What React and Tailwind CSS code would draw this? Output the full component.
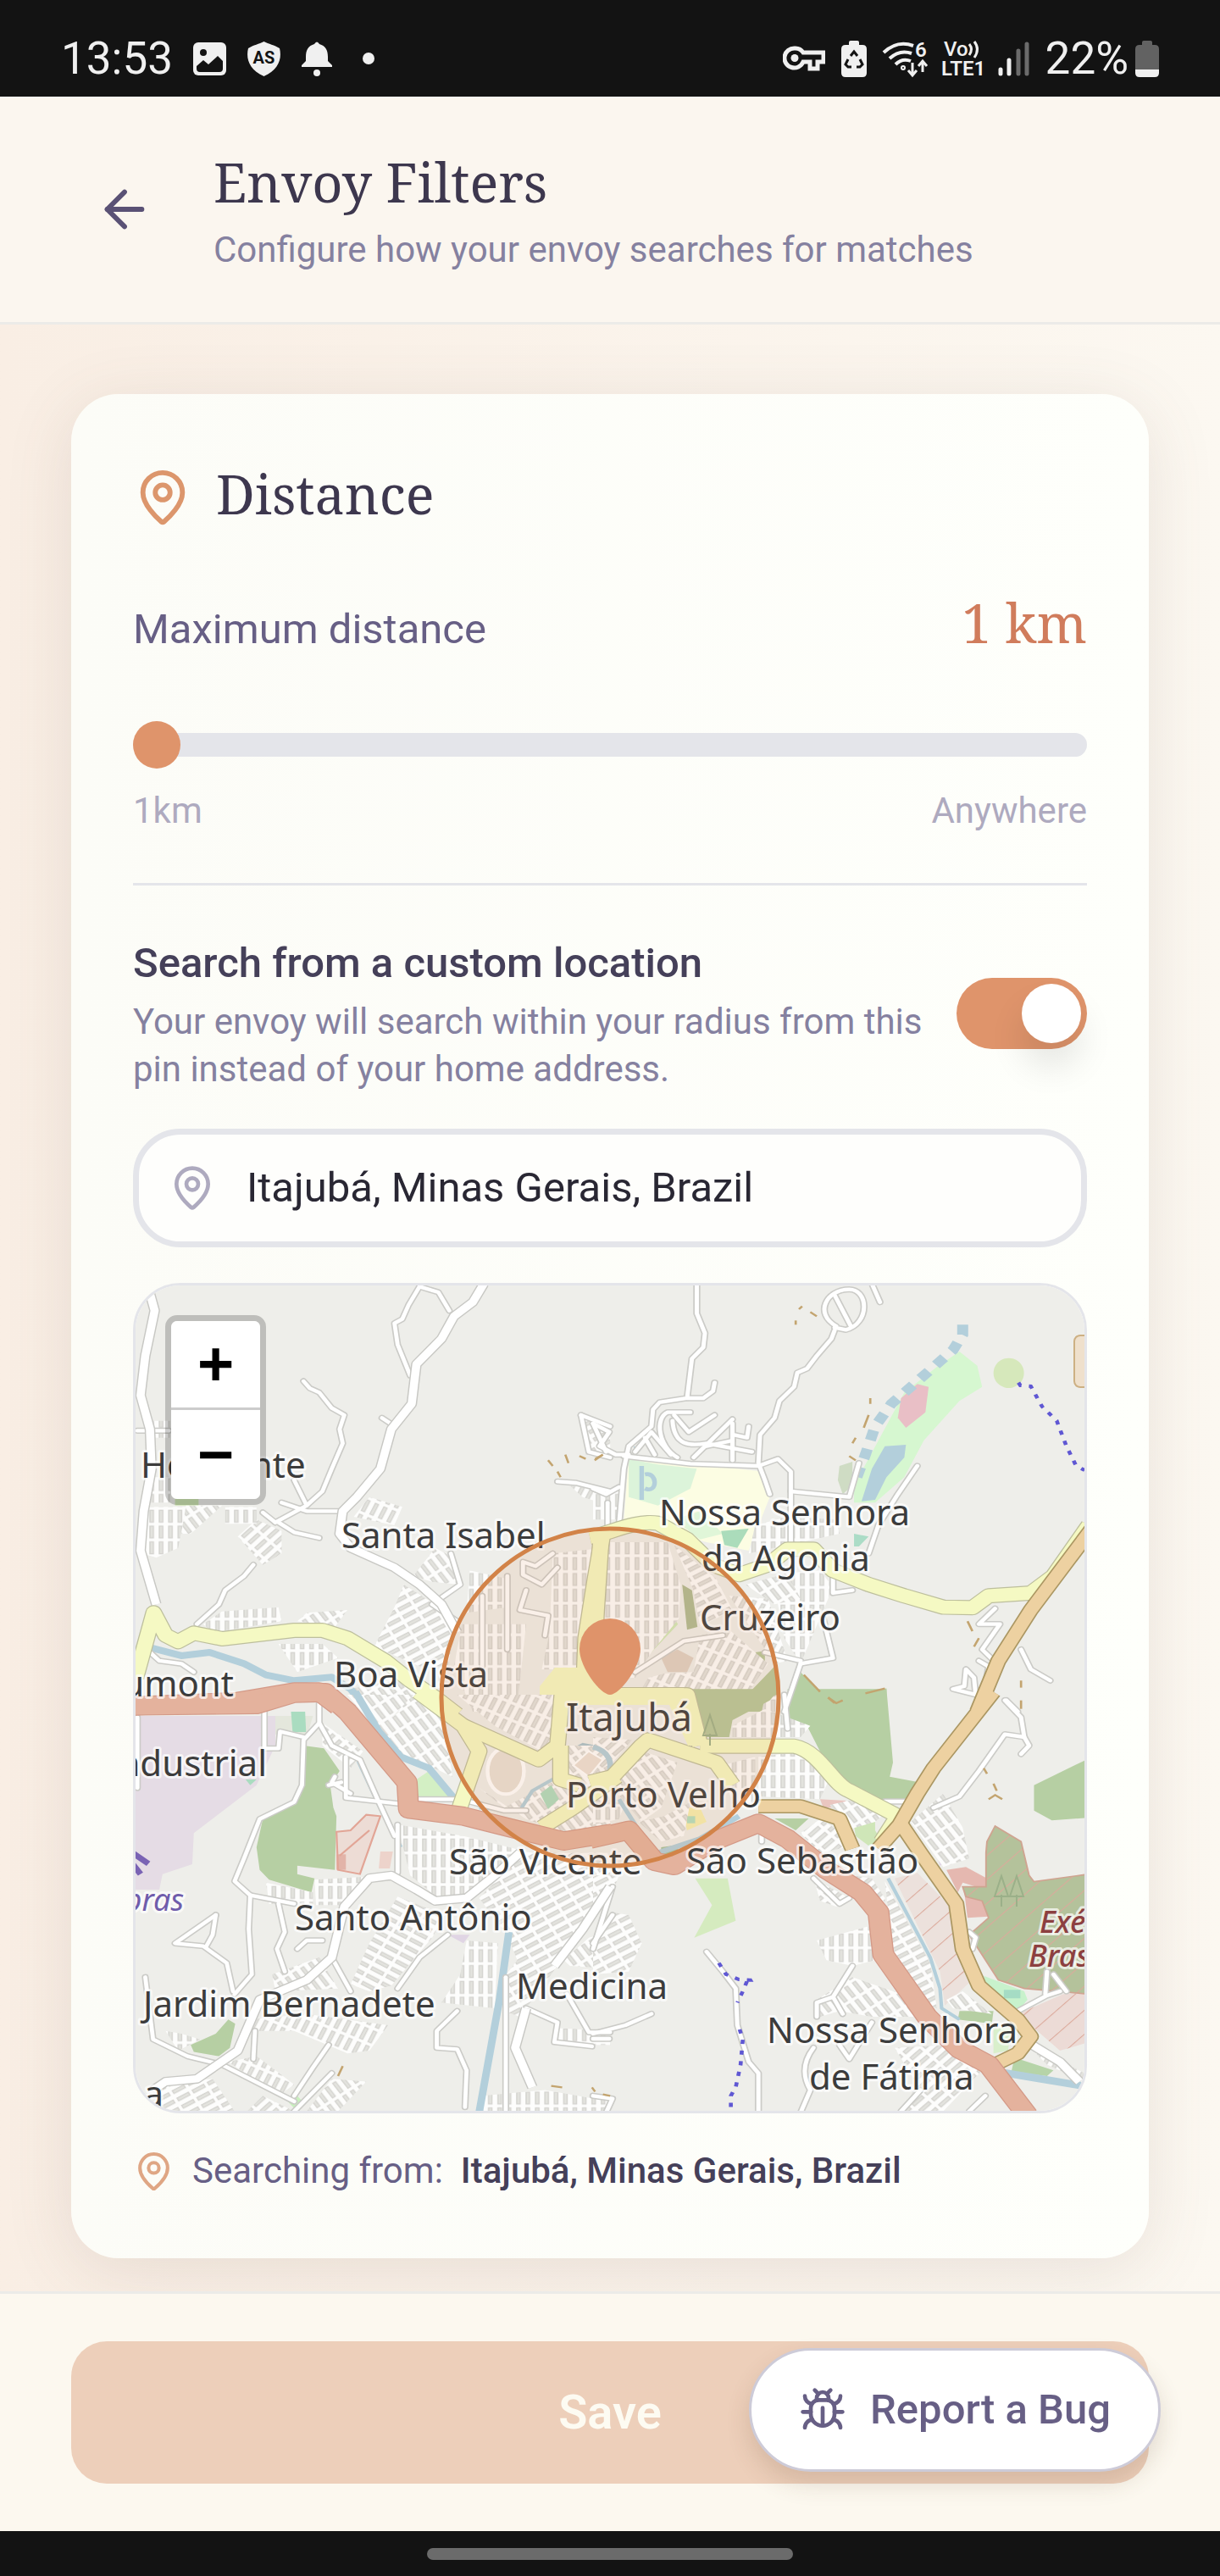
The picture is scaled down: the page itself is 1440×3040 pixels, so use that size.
import { useState } from "react"
import { ArrowLeft, Bug, MapPin } from "lucide-react"

const blockAngles = [0, 25, 45, 60, -35, -60]

// Each tile keeps its own drawing units and is placed by its transform
const tiles = [
  {
    name: "nw",
    transform: "translate(140 1500) scale(0.37 0.3333)",
    areas: [
      ["M180 800H255V830H180Z", "#cfe6b4"],
      ["M1110 1360L1130 1340 1140 1400 1110 1410Z", "#cfe0b8"],
    ],
    blocks: [
      ["M75 835H215L190 980 120 1015 75 1000Z", 0],
      ["M215 830H330L230 930 200 930Z", -35],
      ["M100 530H165V590H100Z", 0],
      ["M95 730H165V820H95Z", 0],
      ["M380 940L440 880 520 920V1000L460 1040Z", 45],
      ["M340 835H440V895H340Z", 0],
      ["M270 1250L330 1205 510 1190 520 1240 300 1280Z", 0],
      ["M510 1320H650L700 1370 570 1420Z", 0],
      ["M570 1240L600 1210 730 1200 690 1260Z", -35],
      ["M800 800L905 835 880 900 750 870Z", 25],
      ["M940 1080L1010 980 1060 1010 1090 1110 1000 1100Z", -35],
      ["M815 1330L880 1190 910 1110 1080 1230 1050 1400 960 1400Z", 60],
      ["M1120 1060L1240 1090V1190L1110 1210Z", 0],
      ["M1095 1250H1300L1270 1560H1130L1070 1400Z", 0],
      ["M1385 1000L1510 985 1480 1410H1350L1375 1280Z", 0],
      ["M740 1480L900 1440 1010 1510 1050 1560H780Z", -35],
      ["M1440 760L1568 780V830L1480 800Z", 25],
      ["M1480 520L1568 550V650H1490Z", 60],
    ],
    rivers: [
      ["M90 1330L200 1362 290 1350 400 1390 470 1430 560 1450 680 1438 740 1480 800 1560", 24],
    ],
    lanes: [
      "M960 55L925 120 905 170 880 185 890 260 930 370",
      "M960 55L1020 75 1055 140",
      "M590 390L610 415 640 430 680 485 720 510 705 560 715 610 680 700 650 780 600 830 500 890",
      "M520 820L600 850 700 850",
      "M560 740L600 830",
      "M510 890L560 925 640 945",
      "M500 890L460 855",
      "M430 1040L400 1080 340 1130 320 1180 250 1250",
      "M840 520L875 545",
      "M1475 510L1568 550",
      "M1475 510L1500 640 1568 660",
      "M1400 745L1460 750 1568 780",
      "M1560 820V900",
      "M60 565H160",
      "M90 1340L130 1380 200 1390 240 1420",
      "M1080 1240L1000 1180 1090 1110 1060 1000",
      "M1385 1000L1330 1045 1290 1030V1075L1350 1110 1400 1050",
      "M1300 1130L1280 1200 1370 1220 1360 1290",
      "M1240 1080V1340M1160 1150V1400",
    ],
    streets: [
      "M1165 45L1130 110 1070 160 1030 240 950 330 935 470 870 560 835 700 760 800 715 850 705 930 740 980 880 1050 960 1110 1030 1180 1080 1280",
      "M100 80L115 140 85 300 70 440 100 560 105 700 80 850 70 990 120 1180",
    ],
    secondary: [
      "M55 1440L112 1210L150 1290 190 1312 240 1282 330 1302 560 1272 650 1272 730 1300 850 1380 930 1450 1010 1510 1080 1570",
      "M1545 930L1520 1090 1490 1300 1485 1440",
    ],
    primary: [],
    trunk: ["M40 1540L380 1524 560 1490 640 1490 700 1540"],
    dashes: ["M1370 670L1385 690", "M1400 710L1410 730", "M1425 650L1435 680", "M1470 655L1490 665", "M1520 665L1545 650"],
    paths: [],
  },
  {
    name: "ne",
    transform: "translate(700 1500) scale(0.3827 0.3333)",
    areas: [
      ["M1130 285L1185 335 1200 410 1130 460 1020 600 960 730 870 820H805V760L880 600 960 430 1060 340Z", "#d6f7d0"],
      ["M1000 400L1035 410 1025 500 965 555 940 520 950 450Z", "#e9bfc6"],
      ["M900 620L965 615 960 660 905 730 870 810 828 815 860 700Z", "#b3cfdb"],
      ["M760 690L800 675V760L770 790 755 740Z", "#cfdcc4"],
      ["M1282 308a47 53 0 1 0 0.1 0Z", "#d6e8bb"],
      ["M110 665L240 675 530 710 545 800 480 990 350 960 95 880Z", "#fcfde3"],
      ["M110 665L200 685 320 700 300 770 200 830 110 800Z", "#dcf4da"],
      ["M250 880L330 850 400 930 330 950Z", "#e0f6d8"],
      ["M395 920L480 912 445 980 405 970Z", "#abdcbb"],
      ["M805 930L850 940 820 975H805Z", "#abdcc6"],
      ["M125 620L150 630 130 645Z", "#b3cfdb"],
      ["M640 1420L690 1480 740 1530 800 1500 905 1478V1560H600L620 1440Z", "#b6cfa3"],
      ["M310 1530L380 1480 480 1495 560 1400 575 1560H305Z", "#b6c79a"],
      ["M275 1110L305 1130 322 1260 290 1270Z", "#aebb92"],
      ["M235 1205L262 1250 180 1350Z", "#d0e8b8"],
      ["M210 1370L260 1340 310 1370 290 1420 230 1420Z", "#ded0c4"],
      ["M500 1350L530 1345V1385L500 1380Z", "#b6c79a"],
    ],
    blocks: [
      ["M0 780H80L75 880H0Z", 0],
      ["M500 900L600 870 750 880 760 930 640 960 480 1000Z", 0],
      ["M590 1070L700 1060 740 1120 640 1390 590 1300 560 1120Z", 0],
      ["M470 1110L600 1070 640 1160 560 1180Z", -35],
      ["M40 960H230L270 1110 265 1230 180 1350 130 1440 30 1440Z", 0],
      ["M250 970L380 1090 430 1200 330 1260 310 1130Z", 60],
      ["M420 1150L540 1160 600 1380 560 1390Z", 25],
      ["M170 1440L220 1425 310 1420 330 1290 420 1270 540 1390 480 1490 150 1480Z", 25],
      ["M530 1510L570 1500V1560H520Z", 0],
    ],
    rivers: [["M150 690V810M160 720C200 710 200 790 160 770", 14]],
    lanes: [
      "M320 50V150L345 220 340 270 305 310 290 450 205 465 185 490 180 550 110 620 95 700 80 900",
      "M290 450H340L370 425 375 395",
      "M750 195C680 150 720 65 790 65C850 65 855 185 780 208L745 200",
      "M745 85L795 195",
      "M862 50L885 110",
      "M745 210L735 240 690 300 660 345 630 360 620 410 575 460 560 520 515 580 510 680 530 740 545 790",
      "M95 655L300 682 510 690 570 665 610 710V960",
      "M610 780L790 800 820 680",
      "M1000 690L940 790 880 900 850 1000",
      "M0 540L50 570 20 620 70 650 110 650",
      "M0 540L40 640",
      "M0 770L40 790 80 765",
      "M300 500H230C190 520 200 620 260 660",
      "M250 510L295 570 375 510",
      "M245 530C250 620 300 620 350 610L490 640",
      "M310 660L430 525",
      "M430 540V670",
      "M350 620L430 600",
      "M480 550L475 590 435 580",
      "M160 590L190 650",
      "M130 640L180 570 240 650",
      "M640 1390L740 1370 710 1230",
      "M530 1350L640 1380",
      "M1240 1195L1190 1250 1255 1250 1200 1340 1245 1390 1215 1440",
      "M1150 1410L1145 1470 1110 1480 1180 1500 1175 1440Z",
      "M1190 1380L1220 1400 1205 1500",
      "M1320 1340L1350 1410 1410 1450",
      "M1275 1520L1310 1560",
      "M740 1080L740 1140 800 1130",
      "M640 1390L590 1560",
      "M130 1420L280 1310 400 1290",
    ],
    streets: [],
    secondary: [
      "M-10 942C50 930 130 880 200 893L290 950 370 1040 450 1075 540 1040 600 985 680 985 740 1060 850 1110 960 1150 1080 1190 1170 1192 1220 1150 1350 1140 1420 1080 1530 900",
      "M25 940L10 1200 0 1420V1500H280",
    ],
    primary: ["M1540 910L1350 1200 1250 1380 1185 1560"],
    trunk: [],
    dashes: [
      "M855 450V470", "M850 510L835 555", "M810 590L800 610", "M790 655L810 670", "M635 135L645 125",
      "M670 145L690 160", "M625 190V175", "M650 1430L700 1490", "M725 1510L750 1530 770 1520", "M840 1495L900 1478",
      "M1155 1240L1170 1275", "M1190 1300L1175 1330", "M1320 1450V1475", "M5 670L30 650",
    ],
    paths: ["M1312 395L1318 405 1350 408 1385 480 1430 530 1460 620 1490 690 1516 705"],
    stream: "M1140 190V225L1110 280 1000 390 920 470 870 550 840 650 810 740",
  },
  {
    name: "sw",
    transform: "translate(140 2000) scale(0.37 0.3333)",
    areas: [
      ["M40 75H500V180L440 320 240 490 235 600 140 635 130 690H40Z", "#e5dce5"],
      ["M500 75H620L600 150 500 140Z", "#e4e7dc"],
      ["M590 180L655 190 705 270 675 320 685 400 695 430 690 620 570 605V635L625 650 615 700 480 655 450 620 440 540 460 440 540 400 590 320Z", "#b6cfa3"],
      ["M550 60H595L598 132H555Z", "#aadcc0"],
      ["M405 300H440L420 320Z", "#aadcc0"],
      ["M970 195L1020 180 1025 200 980 215Z", "#aadcc0"],
      ["M950 300L990 270 1060 360H950Z", "#d3efc4"],
      ["M695 485L740 480 790 425 835 430 770 635 700 620Z", "#eddcd5"],
      ["M695 565H725V620H695Z", "#e2b3a8"],
      ["M835 555H875L865 615H830Z", "#edd3cb"],
      ["M230 1240L310 1200 350 1150 372 1165 355 1250 320 1280 240 1265Z", "#b6cfa3"],
      ["M540 1440L570 1420 590 1445 565 1470Z", "#c8f0bd"],
      ["M1050 850H1120L1100 880Z", "#e0d5e4"],
      ["M1345 820L1385 825 1370 860 1345 850Z", "#f1f7cf"],
      ["M1430 200L1480 170 1568 190V260L1500 300 1440 250Z", "#a9c3cc"],
      ["M1470 900L1500 870V900L1480 915Z", "#b9dfce"],
    ],
    blocks: [
      ["M820 130L960 0 1030 20 1065 290 950 230 870 190Z", -35],
      ["M650 100L780 200 740 260 650 180Z", 45],
      ["M730 0H800L940 0 830 130Z", -35],
      ["M890 460L1100 500 1320 560 1270 640 1200 640 1100 720H1020L930 640Z", 0],
      ["M1150 720L1290 560H1568V700L1400 960 1300 1020 1240 850Z", 60],
      ["M1420 940L1500 860 1568 840V970L1440 960Z", -35],
      ["M625 655L780 645 720 745H630Z", 0],
      ["M470 665L620 700V740H480Z", 0],
      ["M740 1025L800 880 890 715 1040 780 1000 860 870 1030 800 1050Z", -60],
      ["M490 990L640 930 700 1040 500 1050Z", -35],
      ["M1110 870L1210 880 1200 1110 1030 1090 1090 990Z", 0],
      ["M1230 1000L1300 900 1400 960 1280 1140 1230 1120Z", 60],
      ["M420 1150L600 1130 860 1170 800 1260 730 1270 560 1190H420Z", 25],
      ["M350 1300L440 1280 560 1380 510 1420Z", 25],
      ["M130 1380L300 1360 370 1475H140Z", 60],
      ["M410 1475L460 1420 560 1475Z", 45],
      ["M600 1475L680 1360 790 1370 700 1475Z", -35],
      ["M1160 1420L1360 1400 1568 1440V1475H1160Z", 0],
      ["M1080 0H1400V150L1350 200 1200 110Z", 25],
      ["M1150 330L1230 400 1400 300V180H1568V480L1430 490 1300 440Z", -35],
      ["M150 1190L200 1200 260 1220 190 1260Z", 0],
      ["M1390 1180L1568 1190V1240H1390Z", 0],
    ],
    rivers: [
      ["M755 -10L830 130 900 220 990 260 1080 380", 24],
      ["M765 235L830 390 900 540", 13],
      ["M1245 840L1215 1080 1150 1480", 24],
      ["M1150 400L1280 410 1320 340 1400 290", 12],
    ],
    lanes: [
      "M640 30V100L590 160 585 320 560 380 450 440 400 580 370 660 420 710 415 830 425 990 370 1060",
      "M420 710L560 740",
      "M510 740L530 840 505 900 530 980",
      "M725 220V365L890 385",
      "M640 100L680 180 770 230 830 380 880 500",
      "M310 780L180 880 270 890 345 950 365 1050",
      "M310 780L300 850 280 890",
      "M85 1000L110 1220 220 1280 330 1310 560 1440",
      "M890 460V630",
      "M1080 1120L1015 1190V1250L1080 1255 1110 1330 1105 1460",
      "M670 1240L620 1320 560 1420",
      "M1235 1000V1480",
      "M60 80V330",
      "M465 60V190H510L515 130 590 150",
      "M1300 1110L1400 1160 1390 1230 1510 1245",
      "M1430 1060L1500 1195 1568 1195",
      "M570 900L600 870 650 870",
      "M680 1340L560 1475",
      "M435 1190L430 1290",
      "M690 290L680 310 740 350",
      "M670 320L710 310",
      "M680 930L740 1050",
      "M940 370H1090L1230 410H1300",
      "M890 1040L960 930 1050 850",
    ],
    streets: [
      "M110 1400L150 1370 250 1360 380 1260 450 1080 600 1010 680 930 720 750 800 650 870 640 950 690 1010 730 1110 720 1200 640 1280 560",
      "M1300 1110L1265 1250 1320 1390",
      "M1390 960L1480 830 1568 680",
    ],
    secondary: [
      "M955 -10L1100 110 1150 200 1085 410",
      "M1100 110L1260 190 1340 230 1400 180 1415 -10",
      "M1410 180V300L1470 320",
      "M1590 290L1450 400 1350 470",
    ],
    primary: [],
    trunk: ["M40 40L440 35 560 -5 660 -8 730 60 920 310 925 405 1100 430 1280 480 1420 518 1575 490"],
    dashes: ["M715 1315L700 1350", "M1380 1385L1415 1390", "M1510 1390L1520 1405", "M1545 1415L1568 1420"],
    paths: [],
  },
  {
    name: "se",
    transform: "translate(700 2000) scale(0.3827 0.3333)",
    areas: [
      ["M600 -20H905L925 240 915 290 1005 310 970 380 860 370 770 320 700 200 660 110 600 140Z", "#b6cfa3"],
      ["M305 -20H575L545 20 430 90 420 150 340 150Z", "#b6c79a"],
      ["M1360 320L1530 225V435L1415 445 1360 410Z", "#b6cfa3"],
      ["M1090 620L1150 610 1215 650 1210 690 1140 665 1125 700Z", "#e5b8b0"],
      ["M1145 700L1215 740 1220 785 1155 790Z", "#e5b8b0"],
      ["M1240 465L1320 520 1345 640 1360 662 1530 635V1060L1330 1040 1250 1010 1160 850 1220 790 1200 730 1150 715 1140 680 1212 680V560L1215 520Z", "#b4c29b"],
      ["M930 650L1000 630 1110 760 1130 940 1160 1020 1085 1100 1070 980Z", "#ece1dc"],
      ["M1310 1130L1450 1060 1530 1055V1230L1440 1260Z", "#ecdbd6"],
      ["M315 650H415L440 800 312 860 367 745Z", "#d5ebbf"],
      ["M560 438H665L625 480Z", "#b6cfa3"],
      ["M800 430L870 440V480L890 520 850 535 810 500Z", "#cfe6b8"],
      ["M700 370L780 375 760 400 710 400Z", "#eac6c0"],
      ["M1060 565L1115 530 1130 570 1070 605Z", "#e0d5e4"],
      ["M1205 995L1330 1050 1340 1080 1310 1120 1210 1030Z", "#c8f2cc"],
      ["M1267 1045H1318V1075H1267Z", "#a5dcc4"],
      ["M1130 1120H1235L1230 1165 1125 1150Z", "#b6cfa3"],
      ["M1235 1180H1290L1280 1260 1235 1270Z", "#d9efcb"],
      ["M1300 1285L1420 1330 1400 1350 1290 1335Z", "#b6d4a8"],
      ["M1420 1480L1530 1390V1480Z", "#e3dbe6"],
      ["M270 400L330 400 350 450 290 480Z", "#f6efb0"],
      ["M290 430H315V455H290Z", "#b3dfc0"],
      ["M210 540L270 530 250 570 210 570Z", "#a5c39c"],
    ],
    blocks: [
      ["M430 110L530 50 670 110 640 150H430Z", 0],
      ["M510 220L650 200 740 270 700 370 510 360Z", 0],
      ["M730 390L850 360 900 420 870 450 780 480Z", -35],
      ["M640 490L700 440 770 490 780 540 700 560Z", 45],
      ["M980 450L1080 350 1140 470 1160 580 1080 610Z", -35],
      ["M690 870L850 820 870 940 800 960 720 940Z", 0],
      ["M900 660L1040 950 1060 1110 1000 1080 920 930 910 760Z", 60],
      ["M690 1080L800 1000 950 1060 1000 1140H860L760 1120 700 1140Z", -35],
      ["M930 1250L1100 1240 1200 1330 1080 1475H950L1000 1380Z", 45],
      ["M800 640L860 650 900 720 900 760Z", 45],
      ["M60 770L110 780 150 880 110 980 0 990V880Z", 60],
      ["M0 640H80L60 700 0 760Z", 60],
      ["M1090 1080L1140 1050 1230 1130 1110 1110Z", -35],
      ["M150 200L260 240 210 400 150 450 60 330Z", -35],
      ["M220 430L300 380 280 500 210 520 140 450Z", -35],
      ["M400 250L500 220V380L430 390Z", 0],
      ["M0 150L120 160 60 240 0 280Z", 45],
      ["M0 380L100 380 80 440 0 460Z", 0],
      ["M680 650L790 720 750 750 700 730Z", 45],
      ["M1340 1240L1516 1340 1516 1370 1400 1310Z", 25],
    ],
    rivers: [
      ["M1250 1335L1370 1358 1510 1385", 26],
      ["M910 650L1040 930 1070 1040 1075 1110 1130 1150", 11],
      ["M200 560L330 510 450 430", 18],
      ["M0 185C50 200 60 240 50 280", 18],
      ["M80 370L130 460", 14],
    ],
    lanes: [
      "M350 910L400 980 440 1040 445 1170 480 1300 510 1340V1480",
      "M1270 20L1320 80 1330 150 1270 140 1190 270 1130 360 1050 400",
      "M1330 150L1345 180 1320 210",
      "M0 1200L100 1170 180 1130",
      "M0 1218H50",
      "M680 1250C640 1310 650 1360 670 1400L640 1480",
      "M1310 1120L1400 1065 1440 1050",
      "M1400 980L1395 1060",
      "M1420 990L1460 1050",
      "M680 650L760 740 790 720",
      "M900 378H985",
      "M800 960L740 1070 690 1090 690 1140",
      "M740 1070L770 1130",
      "M1160 840L1180 860 1170 900",
      "M60 780L0 880",
      "M0 900L60 680",
      "M590 0L600 120",
      "M860 1160L790 1290 760 1240",
      "M0 1420L60 1430 40 1480",
      "M950 1475L1010 1400",
      "M1160 1475L1210 1420",
      "M520 460V520",
    ],
    streets: ["M1340 1230L1440 1300 1500 1370"],
    secondary: [
      "M0 0H290L330 180",
      "M330 182H620C700 200 740 320 790 340L940 430 890 520",
      "M-10 310L60 290 150 180 170 160 380 240 430 320",
    ],
    primary: [
      "M510 395H640L760 440 800 545",
      "M1235 -10L1050 260 1000 350 945 460 880 545",
      "M945 450L1010 560 1120 740 1140 900 1190 1030 1310 1150 1350 1210 1310 1270 1220 1320",
    ],
    trunk: ["M-10 512L110 480 190 590 250 605 370 520 510 455 600 510 720 620 830 700 880 770 895 920 1030 1140 1130 1255 1220 1310 1340 1490"],
    dashes: ["M725 10L745 30", "M1320 20V50", "M1205 260L1215 280", "M1235 315L1245 340", "M1220 370L1240 355 1262 370"],
    paths: ["M388 950L410 990 450 1008 485 1010 480 1000 462 1050 445 1090", "M452 1185L462 1220 455 1310 440 1390 425 1420V1480"],
  },
]

// x, baseline y, text
const placeNames = [
  [166, 1744, "Horizonte"],
  [403, 1827, "Santa Isabel"],
  [394, 1991, "Boa Vista"],
  [348, 2278, "Santo Antônio"],
  [169, 2380, "Jardim Bernadete"],
  [609, 2359, "Medicina"],
  [530, 2212, "São Vicente"],
  [810, 2211, "São Sebastião"],
  [668, 2133, "Porto Velho"],
  [778, 1800, "Nossa Senhora"],
  [828, 1854, "da Agonia"],
  [826, 1924, "Cruzeiro"],
  [905, 2411, "Nossa Senhora"],
  [955, 2466, "de Fátima"],
]

const roadLayers = [
  ["lanes", "#cbcbc7", 22, "#ffffff", 13],
  ["streets", "#c8c8c4", 34, "#ffffff", 26],
  ["secondary", "#bdbf9d", 54, "#f5f9c3", 47],
  ["primary", "#ab9763", 50, "#edd1a1", 41],
  ["trunk", "#d49a88", 68, "#e4b29d", 61],
]

function Tree({ x, y }) {
  return (
    <path
      d={`M${x} ${y + 28}V${y + 14}M${x - 8} ${y + 16}L${x} ${y - 8}L${x + 8} ${y + 16}Z`}
      fill="none"
      stroke="#9bb089"
      strokeWidth="2"
    />
  )
}

function TownMap() {
  return (
    <svg
      viewBox="160 1517 1120 974"
      preserveAspectRatio="xMidYMid slice"
      className="block h-full w-full font-['Noto_Sans',sans-serif]"
      role="img"
      aria-label="Map of Itajubá"
    >
      <defs>
        {blockAngles.map((angle) => (
          <pattern
            key={angle}
            id={"blocks" + angle}
            width="56"
            height="30"
            patternUnits="userSpaceOnUse"
            patternTransform={`rotate(${angle + 90})`}
          >
            <rect width="56" height="30" fill="#fdfdfc" />
            <rect x="5" y="7" width="46" height="15" fill="#d5d4d0" />
            <rect x="9" y="11" width="38" height="7" fill="#e3e3de" />
          </pattern>
        ))}
        <pattern id="hatch" width="60" height="60" patternUnits="userSpaceOnUse" patternTransform="rotate(45)">
          <rect width="3" height="60" fill="#dba99b" />
        </pattern>
      </defs>

      <rect x="160" y="1517" width="1120" height="974" fill="#eeeeea" />

      {tiles.map((tile) => (
        <g key={tile.name} transform={tile.transform}>
          {tile.areas.map(([d, fill]) => (
            <path key={d} d={d} fill={fill} />
          ))}
          {tile.blocks.map(([d, angle]) => (
            <path key={d} d={d} fill={`url(#blocks${angle})`} />
          ))}
          {tile.rivers.map(([d, width]) => (
            <path key={d} d={d} fill="none" stroke="#b3cfdb" strokeWidth={width} strokeLinejoin="round" />
          ))}
          {tile.stream && (
            <path d={tile.stream} fill="none" stroke="#b3cfdb" strokeWidth="34" strokeDasharray="36 32" />
          )}
        </g>
      ))}

      <g transform="translate(700 2000) scale(0.3827 0.3333)">
        <path d="M930 650L1000 630 1110 760 1130 940 1160 1020 1085 1100 1070 980Z" fill="url(#hatch)" />
        <path d="M1240 465L1320 520 1345 640 1360 662 1530 635V1060L1330 1040 1250 1010 1160 850 1220 790 1200 730 1150 715 1140 680 1212 680V560L1215 520Z" fill="url(#hatch)" stroke="#cfa491" strokeWidth="5" />
        <path d="M1310 1130L1450 1060 1530 1055V1230L1440 1260Z" fill="url(#hatch)" />
      </g>
      <g transform="translate(140 2000) scale(0.37 0.3333)" fill="none" stroke="#e2a596" strokeWidth="6">
        <path d="M695 485L740 480 790 425 835 430 770 635 700 620ZM705 570L800 480" />
        <ellipse cx="1235" cy="270" rx="58" ry="82" fill="#e9e1d6" stroke="#ffffff" strokeWidth="12" />
        <path d="M1345 350L1380 320 1405 370 1370 405Z" fill="#aedcbf" stroke="none" />
        <path d="M1450 250L1500 200 1545 230 1500 290Z" fill="#ece1d6" stroke="#ffffff" />
        <path d="M45 560L95 598M45 600L70 635" stroke="#7a63b4" strokeWidth="20" />
      </g>
      <rect x="1268" y="1576" width="30" height="61" rx="7" fill="#efe0cc" stroke="#cdb083" strokeWidth="2" />

      {roadLayers.map(([kind, casing, casingWidth, fill, width]) => (
        <g key={kind} fill="none" strokeLinejoin="round" strokeLinecap={kind === "lanes" ? "round" : "butt"}>
          {tiles.map((tile) => (
            <g key={tile.name} transform={tile.transform} stroke={casing} strokeWidth={casingWidth}>
              {tile[kind].map((d) => (
                <path key={d} d={d} />
              ))}
            </g>
          ))}
          {kind === "secondary" && (
            <path d="M637 1990L655 1968H684L724 1994 812 2000 832 2060H812L790 2012H664V2000H637Z" fill={fill} />
          )}
          {tiles.map((tile) => (
            <g key={tile.name} transform={tile.transform} stroke={fill} strokeWidth={width}>
              {tile[kind].map((d) => (
                <path key={d} d={d} />
              ))}
            </g>
          ))}
        </g>
      ))}

      {tiles.map((tile) => (
        <g key={tile.name} transform={tile.transform} fill="none">
          {tile.dashes.map((d) => (
            <path key={d} d={d} stroke="#c3a46f" strokeWidth="7" />
          ))}
          {tile.paths.map((d) => (
            <path key={d} d={d} stroke="#5f57d3" strokeWidth="12" strokeDasharray="15 23" />
          ))}
        </g>
      ))}

      <Tree x={838} y={2032} />
      <Tree x={1182} y={2222} />
      <Tree x={1200} y={2222} />

      <g
        fill="#3c3c3c"
        stroke="#ffffff"
        strokeOpacity="0.7"
        strokeWidth="6"
        strokeLinejoin="round"
        paintOrder="stroke"
        fontSize="42"
      >
        {placeNames.map(([x, y, name]) => (
          <text key={x + name} x={x} y={y}>{name}</text>
        ))}
        <text x="276" y="2002" textAnchor="end">umont</text>
        <text x="315" y="2096" textAnchor="end">ndustrial</text>
        <text x="193" y="2486" textAnchor="end">a</text>
        <text x="668" y="2043" fontSize="45">Itajubá</text>
        <text x="217" y="2255" textAnchor="end" fontSize="36" fontStyle="italic" fill="#6f5cab">bras</text>
        <text x="1227" y="2281" fontSize="36" fontStyle="italic" fontWeight="500" fill="#8c4040">Exé</text>
        <text x="1214" y="2321" fontSize="36" fontStyle="italic" fontWeight="500" fill="#8c4040">Bras</text>
      </g>

      <circle cx="720" cy="2003" r="199" fill="#d98a52" fillOpacity="0.13" stroke="#d28348" strokeWidth="5" />
      <path d="M720 2000C709 2000 684 1968 684 1946A36 36 0 0 1 756 1946C756 1968 731 2000 720 2000Z" fill="#df936a" />
    </svg>
  )
}

function StatusBar() {
  return (
    <div className="flex h-[114px] items-center justify-between bg-[#131313] px-[72px] pt-6 text-[53px] leading-[60px] text-[#f0f0f0]">
      <div className="flex items-center gap-6">
        <span>13:53</span>
        <svg width="39" height="39" viewBox="0 0 39 39">
          <rect width="39" height="39" rx="6" fill="#f0f0f0" />
          <circle cx="12" cy="12" r="4" fill="#131313" />
          <path d="M4 31V28L12 21 18 26 29 16 35 22V31Q35 35 31 35H8Q4 35 4 31Z" fill="#131313" />
        </svg>
        <svg width="41" height="41" viewBox="0 0 41 41">
          <path d="M20.500 0C26 3 33 4 39 8C42 20 38 33 20.500 41C3 33 -1 20 2 8C8 4 15 3 20.500 0Z" fill="#f0f0f0" />
          <text x="20.500" y="26" textAnchor="middle" fontSize="20" fontWeight="700" fill="#131313">AS</text>
        </svg>
        <svg width="36" height="41" viewBox="0 0 36 41" fill="#f0f0f0">
          <path d="M15 3Q18 -2 21 3C28 5 31 10 31 18V23L36 28V30H0V28L5 23V18C5 10 8 5 15 3Z" />
          <circle cx="18" cy="37" r="4" />
        </svg>
        <span className="ml-3 size-[14px] rounded-full bg-[#f0f0f0]"></span>
      </div>

      <div className="flex items-center gap-[14px]">
        <svg width="50" height="30" viewBox="0 0 50 30">
          <path d="M14 3A11.500 11.500 0 1 0 24 19H32V27H41V19H48V8H24A11 11 0 0 0 14 3Z" fill="none" stroke="#f0f0f0" strokeWidth="5" />
          <circle cx="14" cy="14.500" r="4.500" fill="#f0f0f0" />
        </svg>
        <svg width="40" height="43" viewBox="-5 0 40 43">
          <path d="M9 2Q9 0 11 0H19Q21 0 21 2V5H25Q30 5 30 10V38Q30 43 25 43H5Q0 43 0 38V10Q0 5 5 5H9Z" fill="#f0f0f0" />
          <path d="M11 18L15 13 19 18M22 22L25 28 22 31H18M12 31H8L5 28 8 22" fill="none" stroke="#131313" strokeWidth="3" />
        </svg>
        <svg width="54" height="43" viewBox="0 -2 54 43" className="overflow-visible" fill="none" stroke="#f0f0f0" strokeWidth="4">
          <path d="M1 12Q17 -3 36 4M8 19Q20 8 34 13M15 26Q23 18 33 22" />
          <circle cx="24" cy="30" r="1" />
          <path d="M35 24V38M30 33L35 39 40 33M47 35V24M42 28L47 22 52 28" strokeWidth="3" />
          <text x="38" y="17" fontSize="24" fontWeight="600" fill="#f0f0f0" stroke="none">6</text>
        </svg>
        <svg width="54" height="42" viewBox="0 0 54 42" className="overflow-visible" fill="#f0f0f0">
          <text x="4" y="18" fontSize="24" fontWeight="500">Vo</text>
          <path d="M34 4Q39 10 34 17M40 1Q47 10 40 20" fill="none" stroke="#f0f0f0" strokeWidth="3" />
          <text x="1" y="41" fontSize="24" fontWeight="600">LTE1</text>
        </svg>
        <svg width="38" height="41" viewBox="0 0 38 41" strokeWidth="5" strokeLinecap="round">
          <path d="M3 33V38M13 22V38" stroke="#f0f0f0" />
          <path d="M24 11V38M34 3V38" stroke="#6b6b6b" />
        </svg>
        <div className="ml-1 flex items-center gap-2">
          <span>22%</span>
          <svg width="28" height="43" viewBox="0 0 28 43">
            <path d="M8 2Q8 0 10 0H18Q20 0 20 2V5H23Q28 5 28 10V34H0V10Q0 5 5 5H8Z" fill="#626262" />
            <path d="M0 34H28V38Q28 43 23 43H5Q0 43 0 38Z" fill="#f0f0f0" />
          </svg>
        </div>
      </div>
    </div>
  )
}

function App() {
  const [distance, setDistance] = useState(1)
  const [custom, setCustom] = useState(true)
  const [location, setLocation] = useState("Itajubá, Minas Gerais, Brazil")

  return (
    <div className="flex min-h-screen flex-col bg-gradient-to-r from-[#f9eee4] to-[#fcf8f1] font-['Roboto',sans-serif]">
      <StatusBar />

      <header className="flex items-center gap-[42px] border-b-3 border-[#ecebe8] bg-[#fbf6ef] px-[84px] py-[53px]">
        <button className="px-7 text-[#5a5175]" aria-label="Back">
          <ArrowLeft size={70} />
        </button>
        <div>
          <h1 className="font-['Noto_Serif',serif] text-[63px] leading-[96px] text-[#3d374e]">Envoy Filters</h1>
          <p className="text-[42px] leading-[64px] text-[#8581a0]">Configure how your envoy searches for matches</p>
        </div>
      </header>

      <main className="grow px-[84px] pt-[82px] pb-[38px]">
        <section className="rounded-[56px] bg-gradient-to-r from-[#fcfcf7] to-[#fefffb] px-[73px] pt-[69px] pb-[75px] shadow-[0_14px_80px_rgba(110,85,80,0.13)]">
          <div className="flex items-center gap-7">
            <MapPin size={70} className="text-[#dc966c]" />
            <h2 className="pb-2 font-['Noto_Serif',serif] text-[63px] leading-[98px] text-[#3d374e]">Distance</h2>
          </div>

          <div className="mt-[46px] flex items-baseline justify-between">
            <label htmlFor="distance" className="text-[49px] leading-[70px] text-[#675f85]">Maximum distance</label>
            <output htmlFor="distance" className="font-['Noto_Serif',serif] text-[63px] leading-[98px] text-[#d07c5c]">
              {distance} km
            </output>
          </div>

          <input
            id="distance"
            type="range"
            min="1"
            max="500"
            value={distance}
            onChange={(event) => setDistance(event.target.value)}
            className="mt-[81px] block h-7 w-full appearance-none rounded-full bg-[#e4e5ea] [&::-webkit-slider-thumb]:size-14 [&::-webkit-slider-thumb]:appearance-none [&::-webkit-slider-thumb]:rounded-full [&::-webkit-slider-thumb]:bg-[#df946b]"
          />
          <div className="mt-9 flex justify-between text-[42px] leading-[56px] text-[#aeaabf]">
            <span>1km</span>
            <span>Anywhere</span>
          </div>

          <div className="mt-[57px] flex items-center justify-between gap-7 border-t-3 border-[#e4e5ea] pt-[57px]">
            <div>
              <label htmlFor="custom" className="block text-[49px] leading-[70px] font-medium text-[#454059]">
                Search from a custom location
              </label>
              <p className="mt-1.5 text-[42px] leading-[56px] text-[#8581a0]">
                Your envoy will search within your radius from this pin instead of your home address.
              </p>
            </div>
            <input
              id="custom"
              type="checkbox"
              role="switch"
              checked={custom}
              onChange={(event) => setCustom(event.target.checked)}
              className="flex h-[84px] w-[154px] shrink-0 appearance-none rounded-full bg-[#d5d5dd] p-[7px] before:size-[70px] before:rounded-full before:bg-white before:shadow-[0_28px_42px_rgba(0,0,0,0.1)] checked:justify-end checked:bg-[#df946b]"
            />
          </div>

          <div className="mt-[42px] flex h-[140px] items-center gap-9 rounded-[56px] border-7 border-[#e4e5ea] bg-[#fefefc] px-[35px]">
            <MapPin size={56} className="shrink-0 text-[#aeaabf]" />
            <input
              type="text"
              aria-label="Location"
              value={location}
              onChange={(event) => setLocation(event.target.value)}
              className="min-w-0 grow text-[49px] leading-[70px] text-[#292733] outline-none"
            />
          </div>

          <div className="relative mt-[42px] h-[980px] overflow-hidden rounded-[56px] border-3 border-[#e4e5ea]">
            <TownMap />
            <div className="absolute top-[35px] left-[35px] flex flex-col rounded-[14px] border-7 border-[#00000033] bg-clip-padding font-['Liberation_Sans',sans-serif] text-[74px] font-bold">
              <button className="h-[105px] w-[105px] rounded-t-[7px] border-b-3 border-[#cccccc] bg-white leading-[98px]" aria-label="Zoom in">+</button>
              <button className="h-[105px] w-[105px] rounded-b-[7px] bg-white leading-[98px]" aria-label="Zoom out">−</button>
            </div>
          </div>

          <p className="mt-10 flex items-center text-[42px] leading-[56px] text-[#675f85]">
            <MapPin size={49} className="mr-[21px] text-[#dfa684]" />
            <span>Searching from:</span>
            <span className="ml-[21px] font-medium text-[#454059]">{location}</span>
          </p>
        </section>
      </main>

      <footer className="relative border-t-3 border-[#ecebe8] bg-[#fcf8ef] px-[84px] pt-[56px] pb-[56px]">
        <button className="block h-[168px] w-full rounded-[42px] bg-[#edcfba] text-[56px] font-semibold text-[#fdfbf2]">Save</button>
        <button className="absolute right-[70px] bottom-[70px] flex h-[146px] items-center gap-7 rounded-full border-3 border-[#cdcbd8] bg-white px-14 text-[49px] font-medium text-[#675f85] shadow-[0_14px_28px_rgba(90,60,40,0.16)]">
          <Bug size={56} />
          Report a Bug
        </button>
      </footer>

      <div className="flex h-[53px] items-center justify-center bg-[#131313]">
        <div className="h-[14px] w-[30%] rounded-full bg-[#6b6b6b]"></div>
      </div>
    </div>
  )
}

export default App
